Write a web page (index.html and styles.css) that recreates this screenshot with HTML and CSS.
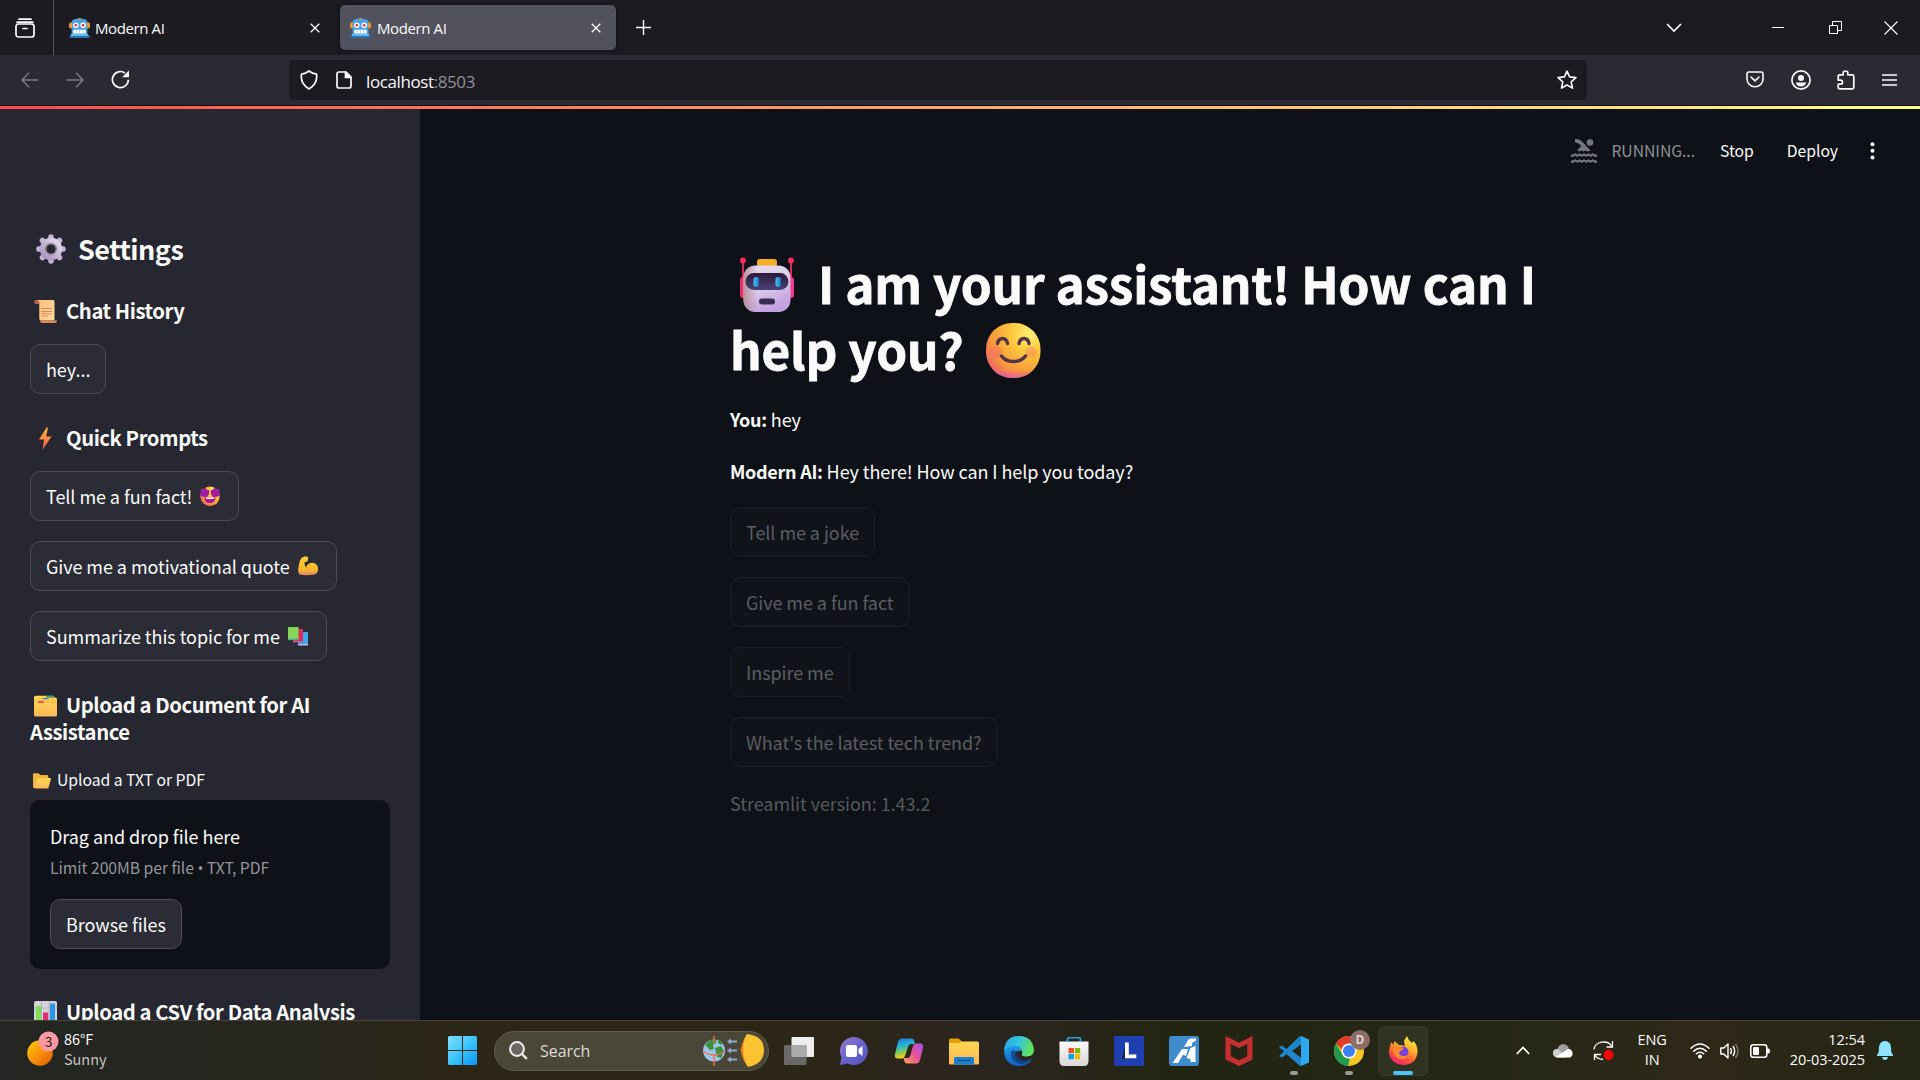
FILE: index.html
```html
<!DOCTYPE html>
<html lang="en">
<head>
<meta charset="utf-8">
<title>Modern AI</title>
<link rel="stylesheet" href="styles.css">
</head>
<body>
<svg class="defs" width="0" height="0">
  <defs>
    <linearGradient id="gWin" x1="0" y1="0" x2="1" y2="1"><stop offset="0" stop-color="#7fe0fb"/><stop offset=".5" stop-color="#3cc4fa"/><stop offset="1" stop-color="#0a94f5"/></linearGradient>
    <linearGradient id="gSun" x1="0" y1="0" x2="1" y2="1"><stop offset="0" stop-color="#ffc907"/><stop offset=".5" stop-color="#f9930a"/><stop offset="1" stop-color="#d9570b"/></linearGradient>
    <linearGradient id="gGear" x1="0" y1="1" x2="1" y2="0"><stop offset="0" stop-color="#a893c4"/><stop offset=".5" stop-color="#c3b6d2"/><stop offset="1" stop-color="#e3dcea"/></linearGradient>
    <linearGradient id="gBolt" x1="0" y1="0" x2="0" y2="1"><stop offset="0" stop-color="#ffb545"/><stop offset=".5" stop-color="#ff8740"/><stop offset="1" stop-color="#f04b4b"/></linearGradient>
    <linearGradient id="gPaper" x1="0" y1="0" x2="1" y2="1"><stop offset="0" stop-color="#ffbd78"/><stop offset="1" stop-color="#ffdba0"/></linearGradient>
    <linearGradient id="gFolder" x1="0" y1="0" x2="0" y2="1"><stop offset="0" stop-color="#ffd84f"/><stop offset="1" stop-color="#fdb85a"/></linearGradient>
    <radialGradient id="gFace" cx=".8" cy=".2" r=".95"><stop offset="0" stop-color="#fff176"/><stop offset=".35" stop-color="#ffc83f"/><stop offset=".75" stop-color="#f8983a"/><stop offset="1" stop-color="#ea6270"/></radialGradient>
    <linearGradient id="gFaceLow" x1="0" y1="0" x2="0" y2="1"><stop offset=".85" stop-color="#e060a0" stop-opacity="0"/><stop offset="1" stop-color="#dd5fae" stop-opacity=".8"/></linearGradient>
    <linearGradient id="gBot" x1="0" y1="0" x2=".4" y2="1"><stop offset="0" stop-color="#e8dcee"/><stop offset=".5" stop-color="#dcd0ea"/><stop offset="1" stop-color="#c3a2e2"/></linearGradient>
    <linearGradient id="gBotEdge" x1="0" y1="0" x2="1" y2="0"><stop offset="0" stop-color="#b58b96" stop-opacity=".9"/><stop offset=".3" stop-color="#b58b96" stop-opacity="0"/></linearGradient>
    <linearGradient id="gVisor" x1="0" y1="0" x2="0" y2="1"><stop offset="0" stop-color="#2e1838"/><stop offset="1" stop-color="#474376"/></linearGradient>
    <linearGradient id="gEye" x1="0" y1="0" x2="1" y2="0"><stop offset="0" stop-color="#4cc2f5"/><stop offset="1" stop-color="#1779c2"/></linearGradient>
    <linearGradient id="gEdgeA" x1="0" y1="0" x2="1" y2=".3"><stop offset="0" stop-color="#22a8ec"/><stop offset=".55" stop-color="#37c5dd"/><stop offset="1" stop-color="#5fe05d"/></linearGradient>
    <linearGradient id="gEdgeB" x1="0" y1="0" x2="0" y2="1"><stop offset="0" stop-color="#22a0ea"/><stop offset="1" stop-color="#0d62c0"/></linearGradient>
    <linearGradient id="gChat" x1="0" y1="0" x2="1" y2="1"><stop offset="0" stop-color="#9a78c8"/><stop offset=".55" stop-color="#6462cf"/><stop offset="1" stop-color="#5a50b8"/></linearGradient>
    <linearGradient id="gCopA" x1="0" y1="0" x2=".2" y2="1"><stop offset="0" stop-color="#1d74dc"/><stop offset=".4" stop-color="#26b5d6"/><stop offset=".7" stop-color="#79c75a"/><stop offset="1" stop-color="#f7cd1d"/></linearGradient>
    <linearGradient id="gCopB" x1="1" y1="0" x2="0" y2="1"><stop offset="0" stop-color="#a153ee"/><stop offset=".5" stop-color="#ea4f94"/><stop offset="1" stop-color="#ffa557"/></linearGradient>
    <linearGradient id="gFox" x1=".8" y1="0" x2=".3" y2="1"><stop offset="0" stop-color="#fff04a"/><stop offset=".4" stop-color="#ffb22b"/><stop offset=".7" stop-color="#ff5a34"/><stop offset="1" stop-color="#f01e7e"/></linearGradient>
    <linearGradient id="gBag" x1="0" y1="0" x2="0" y2="1"><stop offset="0" stop-color="#fafafa"/><stop offset="1" stop-color="#d8d8d8"/></linearGradient>
    <linearGradient id="gArm" x1="0" y1="0" x2="0" y2="1"><stop offset="0" stop-color="#ffcf3a"/><stop offset=".7" stop-color="#fdb927"/><stop offset="1" stop-color="#e98167"/></linearGradient>
    <symbol id="favicon" viewBox="0 0 20 20">
      <path d="M6 2.500Q10-.8 14 2.500" fill="#f29c1f"/><rect x="0" y="5" width="20" height="6" rx="2" fill="#f29c1f"/>
      <path d="M2.500 17V5Q3 2 7 2h6q4 0 4.500 3v12z" fill="#4aa3e0"/><rect x=".5" y="17" width="19" height="3" rx="1" fill="#2a72b0"/><rect x="2" y="16" width="16" height="2" fill="#6cc1f1"/>
      <circle cx="6.500" cy="7.800" r="2.600" fill="#fff"/><circle cx="13.500" cy="7.800" r="2.600" fill="#fff"/><circle cx="6.500" cy="7.800" r="1.200" fill="#e0243c"/><circle cx="13.500" cy="7.800" r="1.200" fill="#e0243c"/>
      <rect x="4" y="12.200" width="12" height="3.500" rx="1" fill="#fff"/><path d="M7 12v4M10 12v4M13 12v4" stroke="#8bc4ea" stroke-width=".6"/>
    </symbol>
  </defs>
</svg>

<header class="tabbar">
  <div class="tab-overview">
    <svg width="20" height="20" viewBox="0 0 20 20" fill="none" stroke="#fbfbfe" stroke-width="1.700" stroke-linecap="round"><path d="M4 1.200h12M2 4.500q0-.4.8-.4h14.400q.8 0 .8.400"/><rect x="1" y="6" width="18" height="13" rx="2.500"/><path d="M8 10.500h4"/></svg>
  </div>
  <div class="tab">
    <svg class="fav"><use href="#favicon"/></svg><span>Modern AI</span>
    <svg class="x" viewBox="0 0 10 10"><path d="M.7.7l8.600 8.600M9.300.7L.7 9.300"/></svg>
  </div>
  <div class="tab active">
    <svg class="fav"><use href="#favicon"/></svg><span>Modern AI</span>
    <svg class="x" viewBox="0 0 10 10"><path d="M.7.7l8.600 8.600M9.300.7L.7 9.300"/></svg>
  </div>
  <svg class="plus" width="15" height="15" viewBox="0 0 15 15"><path d="M7.500 0v15M0 7.500h15" stroke="#fbfbfe" stroke-width="1.400"/></svg>
  <div class="window-controls">
    <svg width="16" height="10" viewBox="0 0 16 10"><path d="M1 1l7 7 7-7" fill="none" stroke="#fbfbfe" stroke-width="1.600"/></svg>
    <svg width="12" height="12" viewBox="0 0 12 12"><path d="M0 5.500h12" stroke="#fff"/></svg>
    <svg width="13" height="13" viewBox="0 0 13 13" fill="none" stroke="#fff"><path d="M.5 4.500h8v8h-8zM3.500 4.500v-4h9v9h-4"/></svg>
    <svg width="14" height="14" viewBox="0 0 14 14"><path d="M.5.5l13 13M13.500.5l-13 13" stroke="#fff" stroke-width="1.100"/></svg>
  </div>
</header>

<nav class="toolbar">
  <svg class="dim" width="18" height="18" viewBox="0 0 18 18"><path d="M17.500 9H1M8 1.800L1 9l7 7.200"/></svg>
  <svg class="dim" width="18" height="18" viewBox="0 0 18 18"><path d="M.5 9H17M10 1.800L17 9l-7 7.200"/></svg>
  <svg width="19" height="19" viewBox="0 0 19 19"><path d="M17.400 9.800A8 8 0 1 1 14 3" fill="none" stroke="#fbfbfe" stroke-width="1.700"/><path d="M18 .5v6.800h-6.800z" fill="#fbfbfe"/></svg>
  <div class="urlbar">
    <svg width="18" height="20" viewBox="0 0 18 20" fill="none" stroke="#fbfbfe" stroke-width="1.700" stroke-linejoin="round"><path d="M9 1Q12 3.500 16.500 4.200Q18 13.500 9 19Q0 13.500 1.500 4.200Q6 3.500 9 1z"/></svg>
    <svg width="16" height="18" viewBox="0 0 16 18" fill="none" stroke="#fbfbfe" stroke-width="1.700" stroke-linejoin="round"><path d="M3 1h7l5 5v9q0 2-2 2H3q-2 0-2-2V3q0-2 2-2z"/><path d="M9.500 1v5.500H15z" fill="#fbfbfe"/></svg>
    <span class="url">localhost<i>:8503</i></span>
    <svg class="star" width="20" height="20" viewBox="0 0 20 20" fill="none" stroke="#fbfbfe" stroke-width="1.600" stroke-linejoin="round"><path d="M10 1.200l2.600 5.700 6.300.7-4.700 4.200 1.300 6.300L10 15l-5.500 3.100 1.300-6.300L1.100 7.600l6.300-.7z"/></svg>
  </div>
  <div class="tools">
    <svg width="18" height="17" viewBox="0 0 18 17" fill="none" stroke="#fbfbfe" stroke-width="1.600" stroke-linecap="round" stroke-linejoin="round"><path d="M2.800 1h12.400Q17 1 17 2.800V8a8 7.800 0 0 1-16 0V2.800Q1 1 2.800 1z"/><path d="M5 6l4 3.800L13 6"/></svg>
    <svg width="20" height="20" viewBox="0 0 20 20"><circle cx="10" cy="10" r="9.100" fill="none" stroke="#fbfbfe" stroke-width="1.700"/><circle cx="10" cy="7.900" r="3" fill="#fbfbfe"/><path d="M4.800 12.600h10.400Q14 16.600 10 16.600t-5.200-4z" fill="#fbfbfe"/></svg>
    <svg width="18" height="20" viewBox="0 0 18 20" fill="none" stroke="#fbfbfe" stroke-width="1.700" stroke-linejoin="round"><path d="M2.800 4.800h3.400V3q0-2 2.300-2T10.800 3v1.800h4.400q1.600 0 1.600 1.600v10.700q0 1.700-1.600 1.700H2.800Q1.200 18.800 1.200 17v-2.800h2.300q2 0 2-2t-2-2H1.200V6.400q0-1.600 1.600-1.600z"/></svg>
    <svg width="16" height="14" viewBox="0 0 16 14"><path d="M0 2h15M0 7h15M0 12h15" stroke="#fbfbfe" stroke-width="1.500"/></svg>
  </div>
</nav>
<div class="progress"></div>

<div class="app">
  <aside class="sidebar">
    <h2><svg class="e-gear" width="30" height="30" viewBox="0 0 30 30"><g fill="none" stroke="url(#gGear)"><path d="M15.010 3v24M3 15.010h24M6.500 6.500l17 17M23.500 6.500l-17 17" stroke="#c3b4d8" stroke-width="5.600" stroke-linecap="round"/><circle cx="15" cy="15" r="8" stroke-width="6.500"/></g><circle cx="15" cy="15" r="4.800" fill="#262730"/><circle cx="15" cy="15" r="5.500" fill="none" stroke="#8a829a" stroke-width="1.200"/></svg>Settings</h2>
    <h3><svg class="e-h3" viewBox="0 0 23 23"><path d="M2.500 0H19q1.500 0 1.500 2v18.500H7q-1.700 0-1.700-2V4z" fill="url(#gPaper)"/><path d="M0 2q0-2 2.500-2 3 0 3 4H2Q0 4 0 2z" fill="#b5624c"/><path d="M6 20.500h17q0 2.500-2.500 2.500H8q-2 0-2-2.500z" fill="#e0875d"/><path d="M7 8.500h11M7 11.500h11M7 13.800h11M7 16h7" stroke="#e38a5c" stroke-width="1"/></svg>Chat History</h3>
    <button>hey...</button>
    <h3><svg class="e-h3" viewBox="0 0 23 23"><path d="M12.500.5L5 12.500h5L8.500 23 17.500 9.500h-5.300L14 .5z" fill="url(#gBolt)"/></svg>Quick Prompts</h3>
    <div class="stack">
      <button>Tell me a fun fact!<svg class="e-btn" viewBox="0 0 20 20"><circle cx="10" cy="10.300" r="9.700" fill="url(#gFace)"/><path d="M5 1.200L7.300 4l2 .3-.4 4-2 3-3.500-.5L.2 10 1 6.500.3 3l3.500.4zM15 1.200L12.700 4l-2 .3.400 4 2 3 3.500-.5 3.200-.8L19 6.500l.7-3.500-3.500.4z" fill="#a31aa4"/><path d="M4.500 11.500h11q-.5 5.500-5.500 5.500t-5.500-5.500z" fill="#b00f8f"/><path d="M6 11.500h8v1.500H6z" fill="#fff"/></svg></button>
      <button>Give me a motivational quote<svg class="e-btn" viewBox="0 0 20 20"><path d="M6.500.5q3-.8 3.800 1.500l-.8 3.500-2.800.5q-.5 3.500 1.300 5 3-5 7.500-4 4.500 1 4.500 6 0 4.500-3.500 5.500-7 1.200-14 .3Q0 18 .2 13.500 1 6 3 2.500 4.500.8 6.500.5z" fill="url(#gArm)"/><path d="M8 11q2 .5 3.500 3" fill="none" stroke="#e5952a" stroke-width="1"/></svg></button>
      <button>Summarize this topic for me<svg class="e-btn" viewBox="0 0 20 20"><path d="M10 6h10v12.500H10z" fill="#3ba9ea"/><path d="M10 18h10v1.500H10z" fill="#c6b9f0"/><path d="M5 3h10v12.500H5z" fill="#dc2d63"/><path d="M5 15h10v1.500H5z" fill="#c65aa0"/><path d="M0 1h10.500v12.500H0z" fill="#86d55b"/><path d="M0 12.700h10.500v1.500H0z" fill="#4aa98c"/></svg></button>
    </div>
    <h3 class="spaced"><svg class="e-h3" viewBox="0 0 23 23"><path d="M12 1.500h7.500l1 2H12z" fill="#30a877"/><path d="M1.500 1.800h10l1.500 1.700h9L23 5v16q0 1.500-1.500 1.500h-20Q0 22.500 0 21V3.300Q0 1.800 1.500 1.800z" fill="url(#gFolder)"/><path d="M8.500 4.500h6" stroke="#2f83d8" stroke-width="1.300"/><path d="M4 8h6" stroke="#ee4c5c" stroke-width="1.800"/><path d="M0 6.200h22.500M12 8.200h11" stroke="#f1b83d" stroke-width=".7"/></svg>Upload a Document for AI<br>Assistance</h3>
    <label><svg class="e-label" viewBox="0 0 18 16"><path d="M0 1.500Q0 .3 1.300.3h4.200L7.300 2H14q1.300 0 1.300 1.500V9L12 15H1.200Q0 15 0 13.800z" fill="#f4b13b"/><path d="M5.700 5h11.500q1 0 .7 1.200l-2.200 8q-.4 1.300-1.700 1.300H2q-.8 0-.5-1l2.500-8Q4.400 5 5.700 5z" fill="url(#gFolder)"/></svg>Upload a TXT or PDF</label>
    <div class="dropzone">
      <p>Drag and drop file here</p>
      <small>Limit 200MB per file <span class="bullet">•</span> TXT, PDF</small>
      <button>Browse files</button>
    </div>
    <h3 class="csv"><svg class="e-h3" viewBox="0 0 23 23"><rect width="23" height="23" rx="2" fill="#d5d0dc"/><path d="M7.500 0v23M15 0v23M0 7h23" stroke="#b6b0c2"/><rect x="1.800" y="5" width="5.500" height="18" fill="#7ddc58"/><rect x="9" y="11.500" width="5.200" height="12" fill="#de2d74"/><rect x="16" y="2.500" width="5" height="21" fill="#2a96e4"/></svg>Upload a CSV for Data Analysis</h3>
  </aside>

  <main class="main">
    <div class="status">
      <svg width="26" height="24" viewBox="0 0 26 24" fill="#75777c"><circle cx="19" cy="3.500" r="3.300"/><path d="M4 0q4-.2 6.500 2l9 9.500-3 1-2-1-2 1-2-1-2 1L6.300 11l4-4Q8 4 4 3.200z"/><path d="M0 15.500q3 0 4.300-1.500 2.200 2.500 4.400 0 2.100 2.500 4.300 0 2.200 2.500 4.300 0 2.200 2.500 4.400 0Q23 15.500 26 15.500V18q-3 0-4.300-1.500-2.200 2.500-4.400 0-2.100 2.500-4.300 0-2.200 2.500-4.300 0-2.200 2.500-4.400 0Q3 18 0 18zM0 21.500q3 0 4.300-1.500 2.200 2.500 4.400 0 2.100 2.500 4.300 0 2.200 2.500 4.300 0 2.200 2.500 4.400 0Q23 21.500 26 21.500V24q-3 0-4.300-1.500-2.200 2.500-4.400 0-2.100 2.500-4.300 0-2.200 2.500-4.300 0-2.200 2.500-4.400 0Q3 24 0 24z"/></svg>
      <span class="running">RUNNING...</span>
      <span class="stop">Stop</span>
      <span class="deploy">Deploy</span>
      <svg class="kebab" width="5" height="18" viewBox="0 0 5 18" fill="#fafafa"><circle cx="2.500" cy="2.200" r="2"/><circle cx="2.500" cy="8.800" r="2"/><circle cx="2.500" cy="15.400" r="2"/></svg>
    </div>
    <section class="content">
      <h1><svg class="e-bot" viewBox="0 0 56 56"><path d="M4 4v20M52 4v20" stroke="#d62a5c" stroke-width="2"/><circle cx="4" cy="3.500" r="3" fill="#f52c58"/><circle cx="52" cy="3.500" r="3" fill="#f52c58"/><rect x="1" y="20" width="7" height="21" rx="3" fill="#e8316c"/><rect x="48" y="20" width="7" height="21" rx="3" fill="#f23a8e"/><rect x="18" y="2" width="20" height="8" rx="3" fill="#f5ae24"/><rect x="4.500" y="8.500" width="47" height="46.500" rx="12" fill="url(#gBot)"/><rect x="4.500" y="8.500" width="47" height="46.500" rx="12" fill="url(#gBotEdge)"/><rect x="6.500" y="16" width="43" height="17" rx="8.500" fill="url(#gVisor)"/><rect x="14.500" y="20" width="5.500" height="10" rx="2.700" fill="url(#gEye)"/><rect x="36.500" y="20" width="5.500" height="10" rx="2.700" fill="url(#gEye)"/><rect x="20" y="41.500" width="16" height="6" rx="3" fill="#382a50"/></svg>I am your assistant! How can I<br>help you?<svg class="e-smile" viewBox="0 0 55 55"><rect width="54.500" height="55" rx="26" fill="url(#gFace)"/><rect width="54.500" height="55" rx="26" fill="url(#gFaceLow)"/><circle cx="10" cy="29" r="6" fill="#f4666b" opacity=".45"/><circle cx="45" cy="29" r="5.500" fill="#f4666b" opacity=".35"/><path d="M11.500 20.500q1-5 5-5t5 5M33 20.500q1-5 5-5t5 5M15.500 33q4 5.500 12 5.500t12-5.500" fill="none" stroke="#54324a" stroke-width="3.400" stroke-linecap="round"/></svg></h1>
      <p><b>You:</b> hey</p>
      <p><b>Modern AI:</b> Hey there! How can I help you today?</p>
      <button disabled>Tell me a joke</button>
      <button disabled>Give me a fun fact</button>
      <button disabled>Inspire me</button>
      <button disabled>What's the latest tech trend?</button>
      <p class="version">Streamlit version: 1.43.2</p>
    </section>
  </main>
</div>

<footer class="taskbar">
  <div class="weather">
    <svg width="34" height="36" viewBox="0 0 34 36"><circle cx="13" cy="22" r="12.800" fill="url(#gSun)"/><circle cx="21.500" cy="10.500" r="10" fill="#ff99a4"/><text x="21.500" y="15.500" text-anchor="middle" class="badge-text">3</text></svg>
    <div class="two-line"><span>86°F</span><span class="muted">Sunny</span></div>
  </div>
  <div class="center">
    <svg class="start" width="29" height="29" viewBox="0 0 29 29"><path d="M0 1.500Q0 0 1.500 0H14v14H0zM15 0h12.500Q29 0 29 1.500V14H15zM0 15h14v14H1.500Q0 29 0 27.500zM15 15h14v12.500q0 1.500-1.500 1.500H15z" fill="url(#gWin)"/></svg>
    <div class="search">
      <svg width="19" height="19" viewBox="0 0 19 19" fill="none" stroke="#eee"><circle cx="8" cy="8" r="6.900" stroke-width="2" fill="#6a675e"/><path d="M13 13l4.800 4.800" stroke-width="2.400"/></svg>
      <span>Search</span>
      <svg class="doodle" width="64" height="36" viewBox="0 0 64 36"><circle cx="12" cy="17.500" r="11" fill="#9cc6ec"/><path d="M3 12q5-7 10-6l2 3-4 3 1 4-4 1-3-3zM13 15l6-2 3 5-3 7-4-1zM16 6l5 4-2 2-3-2z" fill="#3e8f3c"/><path d="M1 18q11 8 22 0M12 3v7M12 22v11" fill="none" stroke="#f0704d" stroke-width="1.500"/><g fill="#8fa9d0"><path d="M25 8.500l4-3v2h6v2h-6v2zM25 17.500l4-3v2h6v2h-6v2zM25 26.500l4-3v2h6v2h-6v2z"/></g><path d="M45 1l-3 5-2 5-1.500 6 1.500 6 2 5 3 5z" fill="#f27a1c"/><path d="M45 1Q62 3 62 17T46 34Q41 26 41 17T45 1z" fill="#fcc332"/></svg>
    </div>
    <svg class="ico" viewBox="0 0 30 30"><rect x="7.500" y="1" width="22.500" height="20" rx="1" fill="#ededed"/><rect x="0" y="9" width="22.500" height="20" rx="1.500" fill="#777" opacity=".85"/><path d="M7.500 9h15v12h-15z" fill="#aaa"/></svg>
    <svg class="ico" viewBox="0 0 30 30"><path d="M15 1a14 14 0 1 1-6.500 26.500L1 29l1.500-7.500A14 14 0 0 1 15 1z" fill="url(#gChat)"/><rect x="7" y="9" width="11" height="12" rx="2" fill="#fff"/><path d="M19.500 13l4-3v10l-4-3z" fill="#fff"/></svg>
    <svg class="ico" viewBox="0 0 30 30"><path d="M8 2.500h9.500q2 0 2.500 2l1 3.500h-4q-2 0-2.800 2.500L11 20q-1 2.500-3 2.500H4Q0 22.500 1 18L4 6q1-3.500 4-3.500z" fill="url(#gCopA)"/><path d="M22 27.500h-9q-2 0-2.500-2l-1-3.500h4q2 0 2.800-2.500L19 10q1-2.500 3-2.500h4q4 0 3 4.500l-3 12q-1 3.500-4 3.500z" fill="url(#gCopB)"/></svg>
    <svg class="ico" viewBox="0 0 30 30"><path d="M0 4q0-1.500 1.500-1.500h8L13 5.500V12H0z" fill="#e3a006"/><path d="M0 7h11l2-1.500h15.500Q30 5.500 30 7v20.500q0 1-1 1H1q-1 0-1-1z" fill="url(#gFolder)"/><path d="M5 28.500v-6Q5 21 6.500 21h17q1.500 0 1.500 1.500v6z" fill="#1480d6"/><path d="M8.500 24.500h13" stroke="#0a4b87" stroke-width="1.200"/></svg>
    <svg class="ico" viewBox="0 0 30 30"><path d="M0 14Q2 7 11 8.500q7 1.500 7 6.500h-3q-5 0-4 5 1.500 6 9 6 4 0 8-3-4 7-12.500 7Q0 29.500 0 14z" fill="url(#gEdgeB)"/><path d="M8 14q-3 7 3 12 6 4 13 .5 3-2 4.500-4.500-5 3-10 1.500-6-2-6.500-8z" fill="#123f80" opacity=".75"/><path d="M0 14Q1.500 0 15 0t15 14q0 6.500-7.500 6.500-5.500 0-4.500-2.500 1-4-2-6.500Q10 7 0 14z" fill="url(#gEdgeA)"/></svg>
    <svg class="ico" viewBox="0 0 30 30"><path d="M8.500 7V3q0-1.300 1.300-1.300h10.400q1.300 0 1.300 1.300v4" fill="none" stroke="#27a7e8" stroke-width="1.600"/><path d="M.5 5.500h29V25q0 5-4.500 5H5Q.5 30 .5 25z" fill="url(#gBag)"/><path d="M8.500 3.500v2.500M21.500 3.500v2.500" stroke="#27a7e8" stroke-width="1.600"/><path d="M9.500 12H15v5.200H9.500z" fill="#f25022"/><path d="M16 12h5.200v5.200H16z" fill="#7fba00"/><path d="M9.500 18H15v5.200H9.500z" fill="#00a4ef"/><path d="M16 18h5.200v5.200H16z" fill="#ffb900"/></svg>
    <svg class="ico" viewBox="0 0 30 30"><path d="M0 0h30v30H0z" fill="#1f3fb0"/><path d="M11 10v13H8z" fill="#0c2c3c"/><path d="M11 6.500h3.800v12h7.500v3.800H11z" fill="#fff"/></svg>
    <svg class="ico" viewBox="0 0 30 30"><rect width="30" height="30" rx="3" fill="#3e8bcd"/><path d="M3.500 27L13 13h6l-2 7-3-1.500L9 27zM15 11l3-5q1-3.500 4-3.500h5v2L23 7v3zM17.500 22l4-10 5-2v16h-5v-3z" fill="#fff"/></svg>
    <svg class="ico" viewBox="0 0 30 30"><path d="M1.500 0L15 6.800 28.500 0v23.500L15 30 1.500 23.500zM6.700 8v12.300l8.300 4 8.300-4V8L15 12z" fill="#c62f2f" fill-rule="evenodd"/></svg>
    <span class="running-app"><svg class="ico" viewBox="0 0 30 30"><path d="M21 0l-13.500 13L3 9.500 0 11l5 4.500-5 4.500 3 1.500 4.500-3.300L21 30l2-1V1zM22 8.500v13L13 15z" fill="#1f86cb" fill-rule="evenodd"/><path d="M22 0l8 3.500v23L22 30z" fill="#2da9f0"/></svg></span>
    <span class="running-app"><svg class="ico" viewBox="0 0 30 30"><circle cx="15" cy="15" r="15" fill="#f6c623"/><path d="M2 7.500A15 15 0 0 1 28 7.500H15q-6 0-7.500 6z" fill="#e13a2e"/><path d="M2 7.500L8.800 19q2.200 4 7.200 3.500L14 30A15 15 0 0 1 2 7.500z" fill="#219a4f"/><circle cx="15" cy="15" r="7.500" fill="#fff"/><circle cx="15" cy="15" r="6" fill="#3b7ff0"/></svg><b class="profile">D</b></span>
    <span class="running-app current"><svg class="ico" viewBox="0 0 30 30"><path d="M3.500 6l2 3 1-4 4.500 4q4 0 6 1l-1-5L19 0q1 4 5 7l1.500-2q4.500 5 4 11-1 12.500-14.500 13Q2 28 1 16q0-5 2.500-10z" fill="url(#gFox)"/><circle cx="15" cy="16" r="5.500" fill="#7642d8"/><path d="M5 12q6-3 10 0 2 1.500-3 3-2 3 1 4.500 3.500 1.500 7-.5-2 4.500-7.500 4Q4.500 21 5 12z" fill="#ff8a2b"/></svg></span>
  </div>
  <div class="tray">
    <svg width="14" height="9" viewBox="0 0 14 9"><path d="M.8 8L7 1.500 13.200 8" fill="none" stroke="#fff" stroke-width="1.700"/></svg>
    <svg class="cloud" width="20" height="14" viewBox="0 0 20 14"><path d="M0 9q0-4 4.500-4Q6 0 10.500.3 15 .5 16 5L8 12z" fill="#a0a09c"/><path d="M0 9q0-4 4.500-4L14 12l-2 1.500H4Q0 13 0 9z" fill="#cfcfcb"/><path d="M3 13l9-6q4-3.500 6.500-.5 3 4.500-1.500 7H4.500z" fill="#fff"/></svg>
    <svg class="sync" width="21" height="21" viewBox="0 0 21 21" fill="none" stroke="#fff" stroke-width="1.300"><path d="M1 9.500A9.500 8 0 0 1 19 6.500M19.500 1v6h-6M10 19.500Q4 19 2 15M1.500 20v-5.500H8"/><circle cx="15.500" cy="15" r="5" fill="#f00" stroke="none"/></svg>
    <div class="two-line lang"><span>ENG</span><span>IN</span></div>
    <svg class="wifi" width="20" height="16" viewBox="0 0 20 16" fill="none" stroke="#fff" stroke-width="1.500" stroke-linecap="round"><path d="M1 5.300q9-8.600 18 0M3.600 8.200q6.400-6 12.800 0M6.300 10.800q3.700-3.200 7.400 0"/><circle cx="10" cy="13.600" r="1.300" fill="#fff"/></svg>
    <svg class="vol" width="20" height="18" viewBox="0 0 20 18" fill="none" stroke="#fff" stroke-width="1.400" stroke-linejoin="round"><path d="M.8 6h3L8 2v14l-4.200-4h-3z"/><path d="M10.500 6q1.800 3 0 6M13 4q3.300 5 0 10"/><path d="M15.500 2q5 7 0 14" stroke="#77776a"/></svg>
    <svg class="bat" width="20" height="14" viewBox="0 0 20 14"><rect x=".8" y=".8" width="16" height="12.400" rx="2.500" fill="none" stroke="#fff" stroke-width="1.500"/><rect x="3" y="3" width="6" height="8" rx="1" fill="#fff"/><path d="M17 4.500h1.500Q20 4.500 20 7t-1.500 2.500H17z" fill="#fff"/></svg>
    <div class="two-line clock"><span>12:54</span><span>20-03-2025</span></div>
    <svg class="bell" width="16" height="19" viewBox="0 0 16 19" fill="#8fe4fd"><path d="M8 0q5.800.5 6 6.500l.3 4.500 1.700 3v1H0v-1l1.700-3L2 6.500Q2.200.5 8 0zM5 16h6q-.5 3-3 3t-3-3z"/></svg>
  </div>
</footer>
</body>
</html>
```
FILE: styles.css
```css
* { box-sizing: border-box; }
body {
  margin: 0;
  width: 1920px;
  height: 1080px;
  overflow: hidden;
  display: flex;
  flex-direction: column;
  background: #0e1117;
  color: #fafafa;
  font-family: "Noto Sans CJK SC", "Open Sans", sans-serif;
  font-size: 18px;
  letter-spacing: -0.05px;
}
h1, h2, h3, p { margin: 0; }
svg { flex: none; }
.defs { position: absolute; }

/* Browser tab strip */
.tabbar {
  height: 55px;
  flex: none;
  display: flex;
  align-items: center;
  background: #1c1b22;
  font-family: "Open Sans", sans-serif;
  font-size: 15px;
}
.tab-overview {
  width: 54px;
  height: 55px;
  display: flex;
  align-items: center;
  padding-left: 15px;
  border-right: 1px solid #55545c;
}
.tab {
  width: 276px;
  height: 45px;
  margin-left: 5px;
  padding: 0 15px 0 10px;
  display: flex;
  align-items: center;
  border-radius: 5px;
}
.tab + .tab { margin-left: 5px; }
.tab.active { background: #52525e; box-shadow: 0 0 4px #0008; }
.tab span { margin-left: 5px; letter-spacing: -0.4px; }
.tab.active span { margin-left: 6px; }
.fav { width: 21px; height: 21px; }
.x { width: 10px; height: 10px; margin-left: auto; stroke: #fbfbfe; stroke-width: 1.3; }
.plus { margin-left: 20px; }
.window-controls { margin-left: auto; display: flex; align-items: center; padding-right: 22px; }
.window-controls svg:nth-child(2) { margin-left: 90px; }
.window-controls svg:nth-child(3) { margin-left: 45px; }
.window-controls svg:nth-child(4) { margin-left: 42px; }

/* Browser toolbar */
.toolbar {
  height: 51px;
  flex: none;
  display: flex;
  align-items: center;
  padding: 0 22px 1px 21px;
  background: #2b2a33;
  border-bottom: 1px solid #0c0c0d;
}
.toolbar > svg { margin-right: 27px; }
.toolbar > svg:nth-of-type(3) { margin-right: 0; }
.dim path { fill: none; stroke: #7d7c85; stroke-width: 1.5; }
.urlbar {
  width: 1298px;
  height: 40px;
  margin-left: 159px;
  padding: 0 10px 0 11px;
  display: flex;
  align-items: center;
  gap: 18px;
  border-radius: 5px;
  background: #1c1b22;
}
.url {
  margin-left: -4px;
  padding-top: 3px;
  font-family: "Open Sans", sans-serif;
  font-size: 17px;
  letter-spacing: -0.4px;
}
.url i { font-style: normal; color: #8f8f97; }
.star { margin-left: auto; }
.tools { margin-left: auto; display: flex; align-items: center; gap: 27px; }
.tools svg:nth-child(2) { margin-right: -1px; }
.progress { height: 3px; flex: none; background: linear-gradient(90deg, #ff4b4b, #ffa768 50%, #ffff80); }

/* Application */
.app { height: 911px; flex: none; display: flex; overflow: hidden; }
.sidebar {
  width: 420px;
  padding: 122px 30px 0;
  background: #262730;
  display: flex;
  flex-direction: column;
  align-items: flex-start;
}
h2 { font-size: 27px; line-height: 36px; font-weight: 700; margin-bottom: 30px; letter-spacing: -0.5px; }
h3 { font-size: 20.25px; line-height: 27px; font-weight: 700; margin-bottom: 20px; white-space: nowrap; letter-spacing: -0.43px; }
button {
  height: 50px;
  flex: none;
  padding: 0 15px;
  display: flex;
  align-items: center;
  border: 1px solid #4b4c55;
  border-radius: 10px;
  background: #2b2c36;
  color: #fafafa;
  font: 18px/30px "Noto Sans CJK SC", sans-serif;
  letter-spacing: -0.06px;
  white-space: nowrap;
}
.sidebar > button { margin-bottom: 30px; }
.stack { display: flex; flex-direction: column; align-items: flex-start; gap: 20px; }
.spaced { margin: 30px 0 23px; }
.csv { margin-top: 29px; }
label { font-size: 15.75px; line-height: 24px; margin-bottom: 8px; }
.dropzone {
  width: 360px;
  height: 169px;
  flex: none;
  padding: 21px 20px;
  border-radius: 10px;
  background: #0e1117;
}
.dropzone p { line-height: 30px; margin-bottom: 5px; }
.dropzone small { display: block; font-size: 15.75px; line-height: 24px; color: #94959a; margin-bottom: 19px; }
.bullet { font-family: "Open Sans", sans-serif; line-height: 1; }

.e-gear { margin: 0 12px 0 6px; vertical-align: -4px; }
.e-h3 { width: 23px; height: 23px; margin: 0 9px 0 4px; vertical-align: -4px; }
.e-btn { width: 20px; height: 20px; margin-left: 8px; margin-right: 3px; }
.e-label { width: 18px; height: 16px; margin: 0 6px 0 3px; vertical-align: -3px; }

.main { flex: 1; display: flex; flex-direction: column; }
.status {
  height: 84px;
  padding-right: 45px;
  display: flex;
  align-items: center;
  justify-content: flex-end;
  font-size: 15.75px;
}
.status span { padding-bottom: 1px; }
.running { color: #8e9096; margin-left: 14px; }
.stop { margin-left: 25px; }
.deploy { margin-left: 33px; }
.kebab { margin-left: 32px; }
.content {
  margin: 57px 0 0 310px;
  width: 880px;
  display: flex;
  flex-direction: column;
  align-items: flex-start;
  gap: 20px;
}
h1 {
  font-size: 49.5px;
  line-height: 66px;
  font-weight: 700;
  white-space: nowrap;
  margin-bottom: 1px;
  letter-spacing: -0.17px;
  -webkit-text-stroke: 0.8px #fafafa;
}
.e-bot { width: 56px; height: 56px; margin: 0 23px 0 9px; vertical-align: -9px; -webkit-text-stroke: 0; }
.e-smile { width: 55px; height: 55px; margin-left: 22px; vertical-align: -8px; }
.content p { line-height: 32px; letter-spacing: -0.09px; }
.content b { letter-spacing: -0.28px; }
.content button { background: #10141a; border-color: #1c1f25; color: #5c5d61; }
.content .version { color: #56585c; letter-spacing: -0.05px; }

/* Taskbar */
.taskbar {
  height: 60px;
  flex: none;
  position: relative;
  display: flex;
  align-items: center;
  border-top: 1px solid #484738;
  background: linear-gradient(90deg, #232622, #27261e 300px, #2c2616 480px, #2b2616 800px, #2b2520 980px, #232513 1180px, #252716 1500px, #2e2819 1700px, #242513);
  font-family: "Open Sans", sans-serif;
  font-size: 15px;
}
.two-line { display: flex; flex-direction: column; line-height: 20px; font-size: 14.5px; padding-bottom: 2px; }
.muted { color: #c4c4c0; }
.weather { width: 421px; padding-left: 27px; display: flex; align-items: center; }
.weather svg { margin-top: -3px; }
.weather .two-line { margin-left: 3px; padding-bottom: 4px; font-family: "Noto Sans CJK SC", sans-serif; }
.badge-text { font: 14px "Noto Sans CJK SC", sans-serif; fill: #222; }
.center { display: flex; align-items: center; gap: 25px; }
.start { margin: 0 2px 0 27px; }
.search {
  width: 275px;
  height: 40px;
  margin: 0 -10px 0 -10px;
  padding: 0 2px 0 14px;
  display: flex;
  align-items: center;
  border: 1px solid #5e5b4d;
  border-radius: 20px;
  background: #4a4739;
  color: #dddbd4;
  font-size: 16px;
}
.search span { margin-left: 12px; }
.doodle { margin-left: auto; }
.ico { width: 30px; height: 30px; display: block; }
.running-app { position: relative; }
.running-app::after {
  content: "";
  position: absolute;
  left: 11px;
  top: 35px;
  width: 8px;
  height: 4px;
  border-radius: 2px;
  background: #999a92;
}
.current { margin-left: -11px; padding: 9px; border: 1px solid #393b2c; border-radius: 6px; background: #30331f; }
.current::after { left: 14px; top: 44px; width: 20px; background: #4cc2ff; }
.profile {
  position: absolute;
  left: 16px;
  top: -6px;
  width: 20px;
  height: 20px;
  border-radius: 50%;
  background: #8a6e66;
  color: #e2d5d0;
  font-size: 12px;
  line-height: 20px;
  text-align: center;
}
.tray { margin-left: auto; padding-right: 27px; display: flex; align-items: center; }
.cloud { margin-left: 23px; }
.sync { margin-left: 20px; }
.lang { margin-left: 23px; align-items: center; }
.wifi { margin-left: 23px; }
.vol { margin-left: 10px; }
.bat { margin-left: 10px; }
.clock { margin-left: 20px; align-items: flex-end; }
.bell { margin-left: 12px; }
```
